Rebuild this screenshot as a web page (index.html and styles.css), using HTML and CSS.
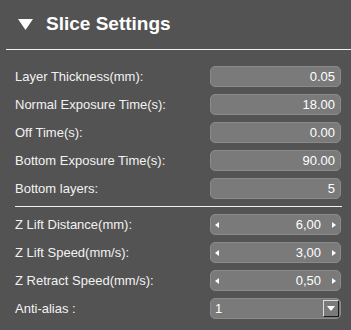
FILE: index.html
```html
<!DOCTYPE HTML>
<html>
<head>
<meta charset="utf-8">
<title>Slice Settings</title>
<link rel="stylesheet" href="styles.css">
</head>
<body>
<div class="panel">
	<div class="head">
		<svg class="arrow" width="15" height="11" viewBox="0 0 15 11"><polygon points="0,0 15,0 7.5,11" fill="#fff"/></svg>
		<span class="title">Slice Settings</span>
	</div>
	<div class="rule"></div>
	<div class="rows">
		<div class="row"><span>Layer Thickness(mm):</span><div class="field">0.05</div></div>
		<div class="row"><span>Normal Exposure Time(s):</span><div class="field">18.00</div></div>
		<div class="row"><span>Off Time(s):</span><div class="field">0.00</div></div>
		<div class="row"><span>Bottom Exposure Time(s):</span><div class="field">90.00</div></div>
		<div class="row"><span>Bottom layers:</span><div class="field">5</div></div>
	</div>
	<div class="sep"></div>
	<div class="rows">
		<div class="row"><span>Z Lift Distance(mm):</span><div class="field spin"><i class="l"></i><b>6,00</b><i class="r"></i></div></div>
		<div class="row"><span>Z Lift Speed(mm/s):</span><div class="field spin"><i class="l"></i><b>3,00</b><i class="r"></i></div></div>
		<div class="row"><span>Z Retract Speed(mm/s):</span><div class="field spin"><i class="l"></i><b>0,50</b><i class="r"></i></div></div>
		<div class="row"><span>Anti-alias :</span><div class="field combo"><b>1</b><div class="drop"><svg width="8" height="5" viewBox="0 0 8 5"><polygon points="0,0 8,0 4,5" fill="#fff"/></svg></div></div></div>
	</div>
</div>
</body>
</html>
```
FILE: styles.css
```css
body{
	margin: 0;
	background-color: #535353;
	font-family: "Liberation Sans", Arial, sans-serif;
	color: #f2f2f2;
}
.panel{
	width: 351px;
	height: 330px;
}
.head{
	height: 49px;
	display: flex;
	align-items: center;
	padding-left: 18px;
	box-sizing: border-box;
	padding-bottom: 1px;
}
.arrow{
	margin-right: 13px;
	margin-top: 1px;
}
.title{
	font-size: 19px;
	font-weight: bold;
	color: #fff;
}
.rule{
	margin-left: 6px;
	height: 1px;
	background: #f0f0f0;
}
.rows{
	display: flex;
	flex-direction: column;
	gap: 7px;
	padding: 0 10px 0 15px;
}
.panel > .rule + .rows{
	padding-top: 16px;
}
.row{
	display: flex;
	align-items: center;
	justify-content: space-between;
	height: 21px;
	font-size: 13px;
}
.field{
	width: 131px;
	height: 21px;
	box-sizing: border-box;
	background: #7a7a7a;
	border: 1px solid #8a8a8a;
	border-radius: 5px;
	text-align: right;
	padding-right: 5px;
	line-height: 19px;
	font-size: 13px;
	color: #fff;
}
.sep{
	margin: 7px 9px 7px 15px;
	height: 1px;
	background: #f0f0f0;
}
.spin{
	display: flex;
	align-items: center;
	padding: 0 4px;
}
.spin b, .combo b{
	font-weight: normal;
	flex: 1;
}
.spin b{
	text-align: right;
	padding-right: 11px;
}
.spin i{
	width: 0;
	height: 0;
	border-top: 3px solid transparent;
	border-bottom: 3px solid transparent;
}
.spin .l{
	border-right: 4px solid #fff;
}
.spin .r{
	border-left: 4px solid #fff;
}
.combo{
	display: flex;
	align-items: center;
	text-align: left;
	padding: 0 1px 0 4px;
}
.drop{
	width: 16px;
	height: 17px;
	box-sizing: border-box;
	border: 1px solid #1a1a1a;
	border-top-color: #ddd;
	border-left-color: #ddd;
	display: flex;
	align-items: center;
	justify-content: center;
	background: #7a7a7a;
}
```
